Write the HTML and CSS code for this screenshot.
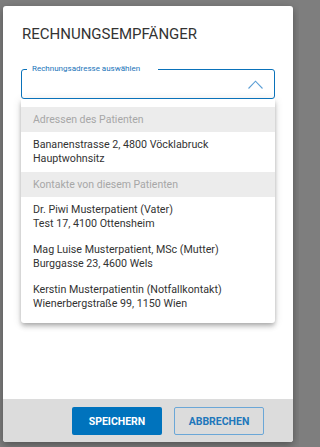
FILE: index.html
```html
<!DOCTYPE html>
<html lang="de">
<head>
<meta charset="utf-8">
<link rel="stylesheet" href="styles.css">
</head>
<body>
<div class="dialog">
  <div class="dialog-body">
    <h1 class="title">RECHNUNGSEMPFÄNGER</h1>
    <div class="field">
      <span class="field-label">Rechnungsadresse auswählen</span>
      <svg class="chevron" width="15" height="9" viewBox="0 0 15 9"><path d="M0.5 8.5 L7.5 1.2 L14.5 8.5" fill="none" stroke="#5c9fd5" stroke-width="1.1"/></svg>
    </div>
    <div class="panel">
      <div class="group">Adressen des Patienten</div>
      <div class="option"><div>Bananenstrasse 2, 4800 Vöcklabruck</div><div>Hauptwohnsitz</div></div>
      <div class="group">Kontakte von diesem Patienten</div>
      <div class="option"><div>Dr. Piwi Musterpatient (Vater)</div><div>Test 17, 4100 Ottensheim</div></div>
      <div class="option"><div>Mag Luise Musterpatient, MSc (Mutter)</div><div>Burggasse 23, 4600 Wels</div></div>
      <div class="option"><div>Kerstin Musterpatientin (Notfallkontakt)</div><div>Wienerbergstraße 99, 1150 Wien</div></div>
    </div>
  </div>
  <div class="footer">
    <button class="btn btn-primary">SPEICHERN</button>
    <button class="btn btn-outline">ABBRECHEN</button>
  </div>
</div>
</body>
</html>
```
FILE: styles.css
```css
html, body {
  margin: 0;
  padding: 0;
}
body {
  background: #7e7e7e;
  width: 299px;
  height: 447px;
  overflow: hidden;
  font-family: Roboto, "Liberation Sans", sans-serif;
}
.dialog {
  margin: 6px 0 0 3px;
  width: 290px;
  height: 436px;
  background: #fff;
  border-radius: 3px;
  box-shadow: 0 3px 8px rgba(0,0,0,0.35);
  display: flex;
  flex-direction: column;
  overflow: hidden;
}
.dialog-body {
  flex: 1;
  padding: 18px 18px 0 18px;
}
.title {
  margin: 0;
  font-size: 15px;
  line-height: 20px;
  font-weight: 400;
  color: #333;
  padding-left: 1px;
}
.field {
  position: relative;
  margin-top: 25px;
  height: 30px;
  box-sizing: border-box;
  border: 1px solid #0a72ba;
  border-radius: 3px;
  display: flex;
  align-items: center;
  justify-content: flex-end;
  padding-right: 11px;
}
.field-label {
  position: absolute;
  left: 5px;
  top: -6px;
  width: 121px;
  padding: 0 5px;
  background: #fff;
  font-size: 8px;
  line-height: 10px;
  color: #1a74b9;
}
.chevron {
  display: block;
  margin-top: 1px;
}
.panel {
  background: #fff;
  padding: 8px 0 6px 0;
  border-radius: 0 0 3px 3px;
  box-shadow: 0 2px 4px -1px rgba(0,0,0,0.2), 0 4px 5px 0 rgba(0,0,0,0.14), 0 1px 10px 0 rgba(0,0,0,0.12);
}
.group {
  height: 25px;
  line-height: 25px;
  background: #ececec;
  color: #a7a7a7;
  font-size: 10.5px;
  padding-left: 12px;
}
.option {
  height: 40px;
  box-sizing: border-box;
  padding: 6px 12px;
  font-size: 10.7px;
  line-height: 14px;
  color: #333;
}
.footer {
  height: 43px;
  flex: none;
  background: #dcdcdc;
  display: flex;
  justify-content: flex-end;
  gap: 12px;
  padding: 8px 29px 0 0;
  box-sizing: border-box;
}
.btn {
  width: 90px;
  height: 28px;
  border-radius: 2px;
  font-family: Roboto, "Liberation Sans", sans-serif;
  font-size: 10.5px;
  font-weight: 700;
  padding: 0;
  box-sizing: border-box;
}
.btn-primary {
  background: #0073bd;
  color: #fff;
  border: none;
}
.btn-outline {
  background: transparent;
  color: #2177bb;
  border: 1px solid #6ba7d7;
}
```
